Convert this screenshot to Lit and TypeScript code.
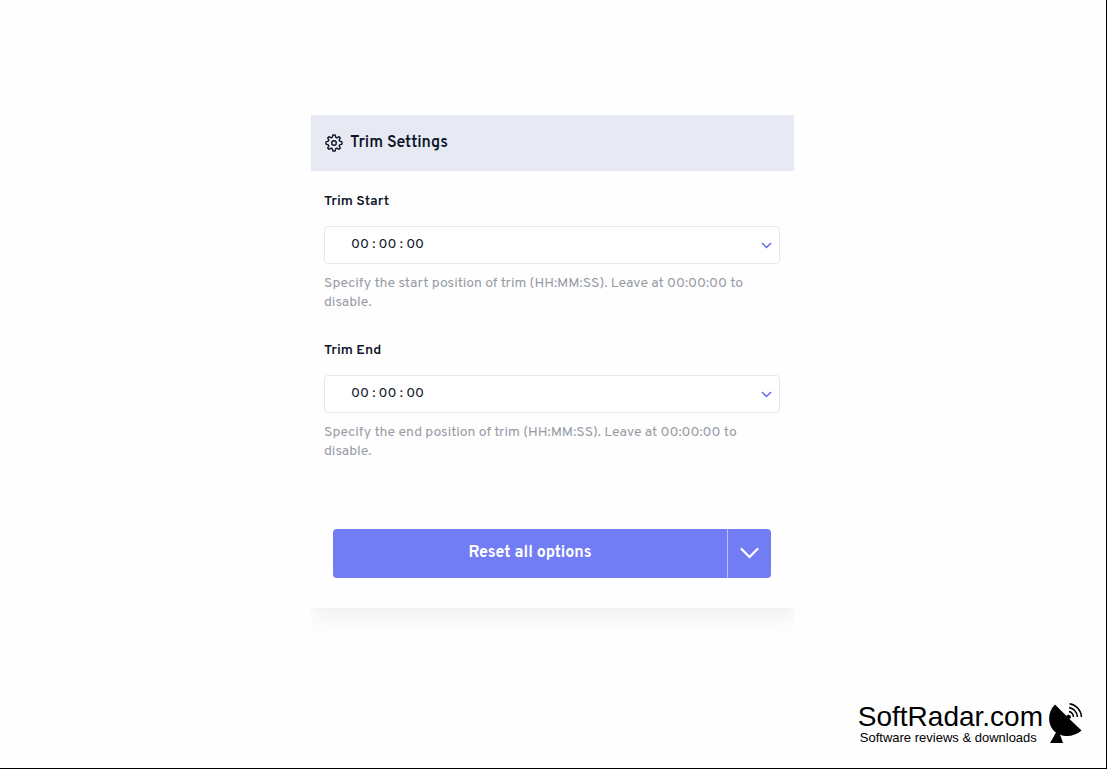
import { LitElement, html, css } from "lit";
import { customElement, property } from "lit/decorators.js";

@customElement("time-field")
class TimeField extends LitElement {
  @property() label = "";
  @property() hint = "";

  static styles = css`
    :host {
      display: block;
    }
    .label {
      display: block;
      font-size: 14px;
      line-height: 20px;
      font-weight: 600;
      color: #0d1529;
    }
    .control {
      display: grid;
      align-items: center;
      margin: 14px 0 10px;
    }
    .select,
    .chevron {
      grid-area: 1 / 1;
    }
    .select {
      appearance: none;
      box-sizing: border-box;
      width: 100%;
      height: 38px;
      margin: 0;
      padding: 0 36px 2px 26px;
      border: 1px solid #e5e6ee;
      border-radius: 4px;
      background: #fff;
      color: #0d1529;
      font-family: inherit;
      font-size: 14px;
      font-weight: 400;
    }
    .chevron {
      justify-self: end;
      margin-right: 8px;
      pointer-events: none;
    }
    .hint {
      margin: 0;
      font-size: 14px;
      line-height: 19px;
      color: #989ba5;
    }
  `;

  render() {
    return html`
      <label class="label" for="time">${this.label}</label>
      <div class="control">
        <select class="select" id="time" aria-describedby="hint">
          <option>00 : 00 : 00</option>
        </select>
        <svg class="chevron" width="11" height="7" viewBox="0 0 11 7" fill="none" stroke="#5f66f2" stroke-width="1.5" aria-hidden="true">
          <path d="M1 1 5.500 5.500 10 1" />
        </svg>
      </div>
      <p class="hint" id="hint">${this.hint}</p>
    `;
  }
}

@customElement("app-root")
class AppRoot extends LitElement {
  static styles = css`
    :host {
      display: block;
      font-family: "Overpass", Roboto, sans-serif;
    }
    .page {
      box-sizing: border-box;
      min-height: 100vh;
      display: flex;
      flex-direction: column;
      justify-content: space-between;
      padding: 115px 23px 23px 22px;
      border-right: 1px solid #000;
      border-bottom: 1px solid #000;
      background: #fefefe;
    }
    .panel {
      width: 100%;
      max-width: 483px;
      margin: 0 auto;
      background: #fefefe;
      box-shadow: 0 8px 26px rgba(0, 0, 0, 0.07);
      clip-path: inset(0 0 -40px 0);
    }
    .header {
      display: flex;
      align-items: center;
      gap: 7px;
      height: 56px;
      padding: 0 14px;
      background: #e7eaf2;
      color: #0d1529;
    }
    .title {
      margin: 0;
      font-size: 16px;
      line-height: 20px;
      font-weight: 600;
    }
    .fields {
      display: grid;
      gap: 29px;
      padding: 21px 14px 0 13px;
    }
    .actions {
      display: flex;
      gap: 1px;
      margin: 68px 23px 0 22px;
      padding-bottom: 30px;
    }
    .button {
      height: 49px;
      margin: 0;
      padding: 0 0 1px;
      border: 0;
      background: #727cf5;
      color: #fff;
      font-family: inherit;
      font-size: 16px;
      font-weight: 700;
    }
    .reset {
      flex: 1;
      border-radius: 4px 0 0 4px;
      box-shadow: 1px 0 #b9bdfa;
    }
    .more {
      display: grid;
      place-items: center;
      width: 43px;
      border-radius: 0 4px 4px 0;
    }
    .brand {
      align-self: flex-end;
      display: flex;
      align-items: flex-end;
      gap: 6px;
      color: #000;
      font-family: "Liberation Sans", Arial, sans-serif;
      text-decoration: none;
    }
    .name,
    .tagline {
      display: block;
    }
    .name {
      font-size: 28px;
      line-height: 28px;
    }
    .tagline {
      padding-left: 2px;
      font-size: 13px;
      line-height: 14px;
    }
  `;

  render() {
    return html`
      <main class="page">
        <section class="panel" aria-labelledby="title">
          <header class="header">
            <svg width="18" height="18" viewBox="0 0 18 18" fill="none" stroke="currentColor" stroke-width="1.400" stroke-linejoin="round" aria-hidden="true">
              <circle cx="9" cy="9" r="2.300" />
              <path d="M7.900 1H10.100L10.800 3.300 11.900 3.800 14 2.700 15.300 4 14.200 6.100 14.700 7.200 17 7.900V10.100L14.700 10.800 14.200 11.900 15.300 14 14 15.300 11.900 14.200 10.800 14.700 10.100 17H7.900L7.200 14.700 6.100 14.200 4 15.300 2.700 14 3.800 11.900 3.300 10.800 1 10.100V7.900L3.300 7.200 3.800 6.100 2.700 4 4 2.700 6.100 3.800 7.200 3.300z" />
            </svg>
            <h1 class="title" id="title">Trim Settings</h1>
          </header>
          <div class="fields">
            <time-field
              label="Trim Start"
              hint="Specify the start position of trim (HH:MM:SS). Leave at 00:00:00 to disable."
            ></time-field>
            <time-field
              label="Trim End"
              hint="Specify the end position of trim (HH:MM:SS). Leave at 00:00:00 to disable."
            ></time-field>
          </div>
          <div class="actions">
            <button class="button reset" type="button">Reset all options</button>
            <button class="button more" type="button" aria-label="More options">
              <svg width="20" height="12" viewBox="0 0 20 12" fill="none" stroke="currentColor" stroke-width="2.200" stroke-linecap="round" aria-hidden="true">
                <path d="M1.500 2l8 8 8-8" />
              </svg>
            </button>
          </div>
        </section>
        <a class="brand" href="#">
          <span>
            <span class="name">SoftRadar.com</span>
            <span class="tagline">Software reviews &amp; downloads</span>
          </span>
          <svg width="34" height="44" viewBox="0 0 34 44" fill="none" stroke="#000" aria-hidden="true">
            <path fill="#000" stroke="none" d="M6 3.500 17.500 15 19 13.500 21.500 14.500 22 16.500 20.500 18 32.500 29.500C26.500 35 17 36.500 11 33.500L14 42H1L7 31.500C-2 25-2 11 6 3.500z" />
            <path stroke-width="1.500" d="M20 10.500A6 6 0 0 1 24.500 16M20 6.500A11 11 0 0 1 28.500 16M20.500 2.800A14 14 0 0 1 32.500 16" />
          </svg>
        </a>
      </main>
    `;
  }
}
